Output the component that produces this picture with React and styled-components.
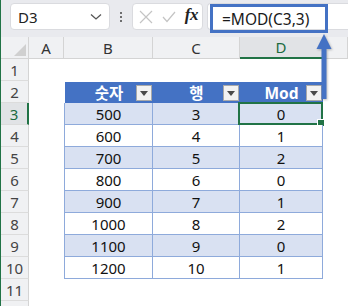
import React from "react";
import styled, { createGlobalStyle, css } from "styled-components";

const GlobalStyle = createGlobalStyle`
  html, body {
    margin: 0;
    padding: 0;
    background: #ffffff;
  }
  body {
    font-family: "Noto Sans", "Noto Sans CJK KR", sans-serif;
  }
`;

const columns = ["A", "B", "C", "D"];

const tableRows = [
  [500, 3, 0],
  [600, 4, 1],
  [700, 5, 2],
  [800, 6, 0],
  [900, 7, 1],
  [1000, 8, 2],
  [1100, 9, 0],
  [1200, 10, 1],
];

const headers = ["숫자", "행", "Mod"];

const App = () => {
  const sheetRows = [];
  for (let r = 1; r <= 12; r++) sheetRows.push(r);

  const renderTableCell = (r, colIdx) => {
    if (r === 2) {
      return (
        <HeadCell key={colIdx} $first={colIdx === 0}>
          <span>{headers[colIdx]}</span>
          <FilterButton>
            <svg width="8" height="5" viewBox="0 0 8 5">
              <path d="M0 0 L8 0 L4 5 Z" fill="#4a4a4a" />
            </svg>
          </FilterButton>
        </HeadCell>
      );
    }
    const row = tableRows[r - 3];
    const selected = r === 3 && colIdx === 2;
    return (
      <BodyCell key={colIdx} $band={r % 2 === 1} $first={colIdx === 0}>
        {row[colIdx]}
        {selected && (
          <Selection>
            <FillHandle />
          </Selection>
        )}
      </BodyCell>
    );
  };

  return (
    <>
      <GlobalStyle />
      <Frame>
        <Toolbar>
          <NameBox>
            <span>D3</span>
            <svg width="12" height="8" viewBox="0 0 12 8">
              <path d="M1 1.5 L6 6 L11 1.5" fill="none" stroke="#555" strokeWidth="1.3" />
            </svg>
          </NameBox>
          <Dots>
            <i />
            <i />
            <i />
          </Dots>
          <FxBox>
            <svg width="14" height="14" viewBox="0 0 14 14">
              <path d="M1 1 L13 13 M13 1 L1 13" stroke="#c4c4c4" strokeWidth="1.2" />
            </svg>
            <svg width="14" height="12" viewBox="0 0 14 12">
              <path d="M1 6 L5 10.5 L13 1" fill="none" stroke="#c4c4c4" strokeWidth="1.2" />
            </svg>
            <FxLabel>fx</FxLabel>
          </FxBox>
          <FormulaField>
            <FormulaHighlight>=MOD(C3,3)</FormulaHighlight>
          </FormulaField>
        </Toolbar>

        <Sheet>
          <Corner />
          {columns.map((c) => (
            <ColHeader key={c} $active={c === "D"}>
              {c}
            </ColHeader>
          ))}
          <ColHeader />

          {sheetRows.map((r) => (
            <React.Fragment key={r}>
              <RowHeader $active={r === 3}>{r <= 11 ? r : ""}</RowHeader>
              <EmptyCell />
              {r >= 2 && r <= 10 ? (
                [0, 1, 2].map((ci) => renderTableCell(r, ci))
              ) : (
                <>
                  <EmptyCell />
                  <EmptyCell />
                  <EmptyCell />
                </>
              )}
              <EmptyCell />
            </React.Fragment>
          ))}
        </Sheet>

        <Pointer width="20" height="72" viewBox="0 0 20 72">
          <path d="M10 2 L17.5 17 L2.5 17 Z" fill="#4472c4" />
          <rect x="7.5" y="16" width="5" height="51" fill="#4472c4" />
        </Pointer>
      </Frame>
    </>
  );
};

const Frame = styled.div`
  position: relative;
  width: 347px;
  height: 306px;
  overflow: hidden;
  border-left: 1px solid #217346;
  background: #ffffff;
`;

const Toolbar = styled.div`
  display: flex;
  align-items: flex-start;
  height: 37px;
  padding: 3px 0 0 9px;
  box-sizing: border-box;
  background: #e9eaee;
`;

const boxBase = css`
  height: 27px;
  box-sizing: border-box;
  background: #ffffff;
  border: 1px solid #dadbdf;
  border-radius: 4px;
  display: flex;
  align-items: center;
`;

const NameBox = styled.div`
  ${boxBase};
  width: 100px;
  justify-content: space-between;
  padding: 0 7px 0 7px;
  font-size: 15px;
  color: #222;
`;

const Dots = styled.div`
  width: 22px;
  height: 27px;
  display: flex;
  flex-direction: column;
  align-items: center;
  justify-content: center;
  gap: 2px;

  i {
    display: block;
    width: 2px;
    height: 2px;
    background: #444;
    border-radius: 1px;
  }
`;

const FxBox = styled.div`
  ${boxBase};
  width: 71px;
  padding: 0 4px 0 6px;
  justify-content: space-between;
`;

const FxLabel = styled.span`
  font-family: "Liberation Serif", serif;
  font-style: italic;
  font-weight: 700;
  font-size: 17px;
  color: #222;
  letter-spacing: -0.5px;
  margin-top: -3px;
`;

const FormulaField = styled.div`
  ${boxBase};
  flex: 1;
  margin-left: 4px;
  border-right: none;
  border-radius: 4px 0 0 4px;
  align-items: flex-start;
  overflow: visible;
`;

const FormulaHighlight = styled.div`
  margin: 0 0 0 2px;
  width: 118px;
  height: 29px;
  box-sizing: border-box;
  border: 3px solid #4472c4;
  display: flex;
  align-items: center;
  padding-left: 9px;
  font-size: 15.5px;
  color: #1a1a1a;
`;

const Sheet = styled.div`
  display: grid;
  grid-template-columns: 28px 35px 89px 87px 83px 1fr;
  grid-auto-rows: 22px;
  font-size: 15px;
  color: #111;
`;

const Corner = styled.div`
  background: #f0f1f3;
  border-right: 1px solid #d4d4d4;
  border-bottom: 1px solid #d4d4d4;
  position: relative;

  &::after {
    content: "";
    position: absolute;
    right: 2px;
    bottom: 2px;
    border-left: 12px solid transparent;
    border-bottom: 12px solid #d0d0d0;
  }
`;

const ColHeader = styled.div`
  box-sizing: border-box;
  background: ${(p) => (p.$active ? "#e1e3e6" : "#f0f1f3")};
  border-right: 1px solid #d4d4d4;
  border-bottom: ${(p) => (p.$active ? "2px solid #217346" : "1px solid #d4d4d4")};
  color: ${(p) => (p.$active ? "#1c6b41" : "#333")};
  display: flex;
  align-items: center;
  justify-content: center;
  font-size: 15px;
`;

const RowHeader = styled.div`
  box-sizing: border-box;
  background: ${(p) => (p.$active ? "#e1e3e6" : "#f0f1f3")};
  border-right: ${(p) => (p.$active ? "2px solid #217346" : "1px solid #d4d4d4")};
  border-bottom: 1px solid #dcdcdc;
  color: ${(p) => (p.$active ? "#1c6b41" : "#444")};
  display: flex;
  align-items: center;
  justify-content: center;
  font-size: 15px;
`;

const EmptyCell = styled.div`
  background: #ffffff;
`;

const HeadCell = styled.div`
  position: relative;
  box-sizing: border-box;
  background: #4472c4;
  color: #ffffff;
  font-weight: 700;
  display: flex;
  align-items: center;
  justify-content: center;
  font-size: 15.5px;
  margin-top: 1px;
  margin-left: ${(p) => (p.$first ? "1px" : "0")};
`;

const FilterButton = styled.div`
  position: absolute;
  right: 1px;
  top: 3px;
  width: 16px;
  height: 16px;
  box-sizing: border-box;
  background: #f2f2f2;
  border: 1px solid #a9a9a9;
  display: flex;
  align-items: center;
  justify-content: center;
`;

const BodyCell = styled.div`
  position: relative;
  box-sizing: border-box;
  background: ${(p) => (p.$band ? "#d9e1f2" : "#ffffff")};
  border-right: 1px solid #8eaadb;
  border-bottom: 1px solid #8eaadb;
  border-left: ${(p) => (p.$first ? "1px solid #8eaadb" : "none")};
  display: flex;
  align-items: center;
  justify-content: center;
  font-size: 15px;
  color: #111;
`;

const Selection = styled.div`
  position: absolute;
  left: -2px;
  top: -1px;
  right: -1px;
  bottom: -1px;
  border: 2px solid #217346;
`;

const FillHandle = styled.div`
  position: absolute;
  right: -4px;
  bottom: -4px;
  width: 6px;
  height: 6px;
  background: #217346;
  border: 1px solid #ffffff;
`;

const Pointer = styled.svg`
  position: absolute;
  left: 313px;
  top: 32px;
  filter: drop-shadow(1px 1px 1px rgba(0, 0, 0, 0.25));
`;

export default App;
